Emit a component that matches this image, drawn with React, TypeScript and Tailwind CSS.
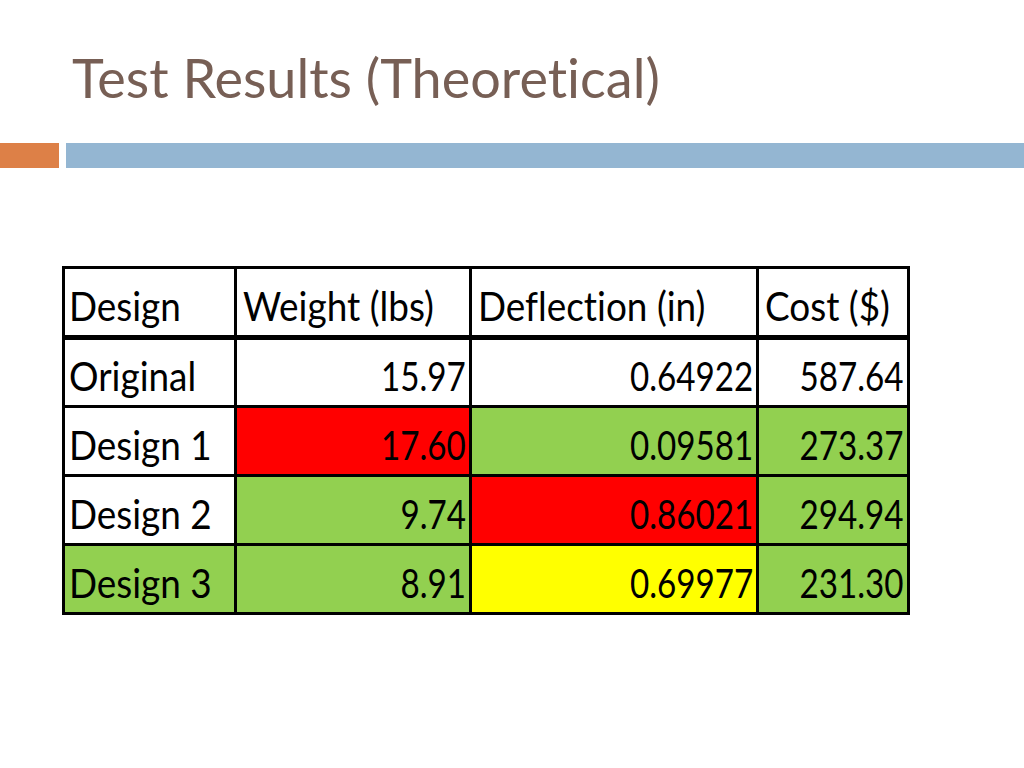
import React from "react";

const rows = [
  { name: "Original", nameBg: "bg-white", w: "15.97", wBg: "bg-white", d: "0.64922", dBg: "bg-white", c: "587.64", cBg: "bg-white" },
  { name: "Design 1", nameBg: "bg-white", w: "17.60", wBg: "bg-[#ff0000]", d: "0.09581", dBg: "bg-[#92d050]", c: "273.37", cBg: "bg-[#92d050]" },
  { name: "Design 2", nameBg: "bg-white", w: "9.74", wBg: "bg-[#92d050]", d: "0.86021", dBg: "bg-[#ff0000]", c: "294.94", cBg: "bg-[#92d050]" },
  { name: "Design 3", nameBg: "bg-[#92d050]", w: "8.91", wBg: "bg-[#92d050]", d: "0.69977", dBg: "bg-[#ffff00]", c: "231.30", cBg: "bg-[#92d050]" },
];

const cellFont = "font-['Lato',sans-serif] text-[41px] leading-none text-black [font-variant-ligatures:none]";

function T({ children }: { children: React.ReactNode }) {
  return <span className="inline-block origin-left scale-x-[0.9] whitespace-nowrap">{children}</span>;
}

function N({ children }: { children: React.ReactNode }) {
  return (
    <div className="flex justify-end overflow-visible">
      <span className="inline-block shrink-0 origin-right scale-x-[0.81] whitespace-nowrap">{children}</span>
    </div>
  );
}

export default function App() {
  return (
    <div className="w-[1024px] h-[768px] bg-white overflow-hidden relative">
      <div className="pt-[51px] pl-[72px] h-[143px]">
        <h1 className="font-['Lato',sans-serif] text-[54px] leading-none text-[#775f55] font-normal [font-variant-ligatures:none]">
          Test Results (Theoretical)
        </h1>
      </div>
      <div className="flex h-[25px] gap-[7px]">
        <div className="w-[59px] bg-[#dd8047]" />
        <div className="flex-1 bg-[#94b6d2]" />
      </div>
      <div className="pt-[98px] pl-[62px]">
        <table className={`table-fixed w-[845px] border-collapse border-[3px] border-black ${cellFont}`}>
          <colgroup>
            <col className="w-[172px]" />
            <col className="w-[235px]" />
            <col className="w-[287px]" />
            <col className="w-[151px]" />
          </colgroup>
          <thead>
            <tr className="h-[70px] border-b-[5px] border-black">
              <th className="border-[3px] border-black border-b-[5px] text-left font-normal px-[4px] pt-[6px] align-middle overflow-visible whitespace-nowrap"><T>Design</T></th>
              <th className="border-[3px] border-black border-b-[5px] text-left font-normal px-[6px] pt-[6px] align-middle overflow-visible whitespace-nowrap"><T>Weight (lbs)</T></th>
              <th className="border-[3px] border-black border-b-[5px] text-left font-normal px-[6px] pt-[6px] align-middle overflow-visible whitespace-nowrap"><T>Deflection (in)</T></th>
              <th className="border-[3px] border-black border-b-[5px] text-left font-normal px-[6px] pt-[6px] align-middle overflow-visible whitespace-nowrap"><T>Cost ($)</T></th>
            </tr>
          </thead>
          <tbody>
            {rows.map((r) => (
              <tr key={r.name} className="h-[69px]">
                <td className={`border-[3px] border-black px-[4px] pt-[6px] text-left whitespace-nowrap ${r.nameBg}`}><T>{r.name}</T></td>
                <td className={`border-[3px] border-black px-[3px] pt-[6px] ${r.wBg}`}><N>{r.w}</N></td>
                <td className={`border-[3px] border-black px-[3px] pt-[6px] ${r.dBg}`}><N>{r.d}</N></td>
                <td className={`border-[3px] border-black px-[3px] pt-[6px] ${r.cBg}`}><N>{r.c}</N></td>
              </tr>
            ))}
          </tbody>
        </table>
      </div>
    </div>
  );
}
